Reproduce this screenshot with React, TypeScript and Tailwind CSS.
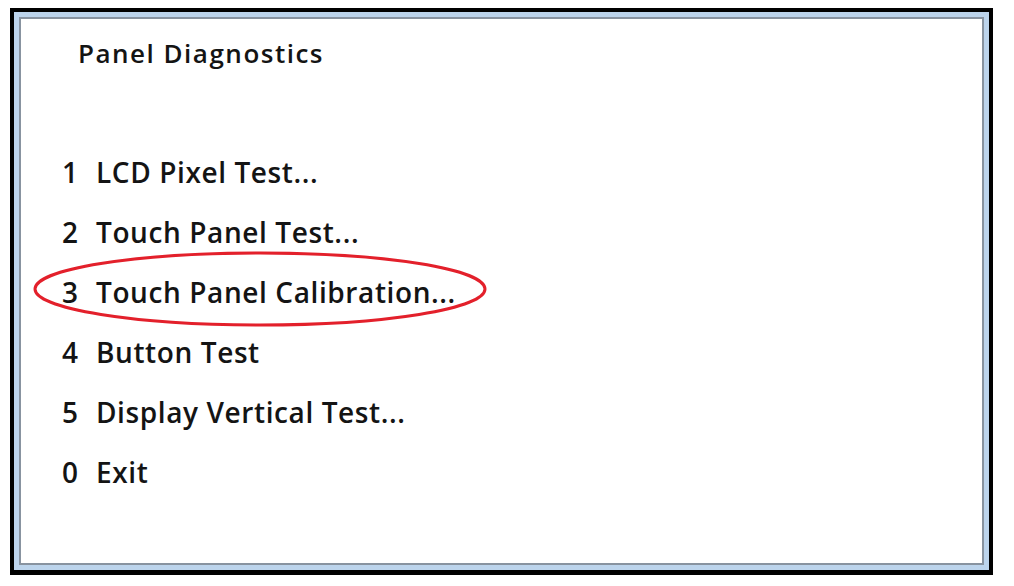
import React from "react";

const items = [
  { n: "1", label: "LCD Pixel Test..." },
  { n: "2", label: "Touch Panel Test..." },
  { n: "3", label: "Touch Panel Calibration..." },
  { n: "4", label: "Button Test" },
  { n: "5", label: "Display Vertical Test..." },
  { n: "0", label: "Exit" },
];

export default function App() {
  return (
    <div className="w-[1014px] h-[586px] bg-white pl-[10px] pt-[8px]" style={{ fontFamily: '"Open Sans", "Noto Sans", sans-serif' }}>
      <div className="w-[983px] h-[567px] bg-black pl-[4px] pt-[4px] pr-[4px] pb-[5px]">
        <div className="w-full h-full bg-[#bcd4ec] p-[5px]">
          <div className="w-full h-full border-2 border-[#8893a0] bg-white">
            <div className="relative w-full h-full pt-[17px]">
              <div className="pl-[57px] h-[34px] leading-[34px] text-[26px] tracking-[1.5px] font-semibold text-[#141414]">Panel Diagnostics</div>
              <div className="mt-[72px] flex flex-col">
                {items.map((it) => (
                  <div key={it.n} className="flex items-center h-[60px] pl-[41px] text-[28px] tracking-[0.6px] font-semibold text-[#141414] leading-none">
                    <span className="w-[34px]">{it.n}</span>
                    <span>{it.label}</span>
                  </div>
                ))}
              </div>
              <svg className="absolute left-[11px] top-[231px]" width="456" height="78" viewBox="0 0 456 78">
                <ellipse cx="228" cy="39" rx="225" ry="36" fill="none" stroke="#e3202b" strokeWidth="3" />
              </svg>
            </div>
          </div>
        </div>
      </div>
    </div>
  );
}
